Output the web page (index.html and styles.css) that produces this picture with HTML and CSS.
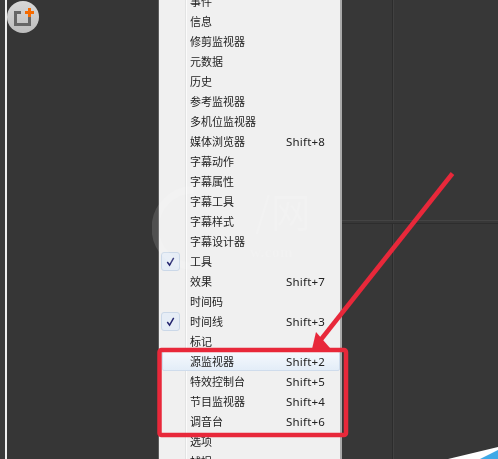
FILE: index.html
```html
<!DOCTYPE html>
<html lang="zh">
<head>
<meta charset="utf-8">
<title>窗口菜单</title>
<link rel="stylesheet" href="styles.css">
</head>
<body>
<div class="screen">
  <div class="edge"></div>
  <div class="edge-line"></div>
  <div class="panel-left"></div>
  <ul class="menu">
    <li class="row"><span class="slot"></span><span class="label">事件</span></li>
    <li class="row"><span class="slot"></span><span class="label">信息</span></li>
    <li class="row"><span class="slot"></span><span class="label">修剪监视器</span></li>
    <li class="row"><span class="slot"></span><span class="label">元数据</span></li>
    <li class="row"><span class="slot"></span><span class="label">历史</span></li>
    <li class="row"><span class="slot"></span><span class="label">参考监视器</span></li>
    <li class="row"><span class="slot"></span><span class="label">多机位监视器</span></li>
    <li class="row"><span class="slot"></span><span class="label">媒体浏览器</span><span class="key">Shift+8</span></li>
    <li class="row"><span class="slot"></span><span class="label">字幕动作</span></li>
    <li class="row"><span class="slot"></span><span class="label">字幕属性</span></li>
    <li class="row"><span class="slot"></span><span class="label">字幕工具</span></li>
    <li class="row"><span class="slot"></span><span class="label">字幕样式</span></li>
    <li class="row"><span class="slot"></span><span class="label">字幕设计器</span></li>
    <li class="row"><span class="slot checked"><svg class="tick" viewBox="0 0 12 12"><path d="M2.5 6.5 L5 10 L9.5 2"/></svg></span><span class="label">工具</span></li>
    <li class="row"><span class="slot"></span><span class="label">效果</span><span class="key">Shift+7</span></li>
    <li class="row"><span class="slot"></span><span class="label">时间码</span></li>
    <li class="row"><span class="slot checked"><svg class="tick" viewBox="0 0 12 12"><path d="M2.5 6.5 L5 10 L9.5 2"/></svg></span><span class="label">时间线</span><span class="key">Shift+3</span></li>
    <li class="row"><span class="slot"></span><span class="label">标记</span></li>
    <li class="row hover"><span class="slot"></span><span class="label">源监视器</span><span class="key">Shift+2</span></li>
    <li class="row"><span class="slot"></span><span class="label">特效控制台</span><span class="key">Shift+5</span></li>
    <li class="row"><span class="slot"></span><span class="label">节目监视器</span><span class="key">Shift+4</span></li>
    <li class="row"><span class="slot"></span><span class="label">调音台</span><span class="key">Shift+6</span></li>
    <li class="row"><span class="slot"></span><span class="label">选项</span></li>
    <li class="row"><span class="slot"></span><span class="label">捕捉</span></li>
  </ul>
  <div class="panel-right">
    <div class="pane-top"><div class="pane-a"></div><div class="pane-b"></div></div>
    <div class="pane-rule"></div>
    <div class="pane-bottom"><div class="pane-a"></div><div class="pane-b"></div></div>
  </div>

  <div class="mark">
    <svg class="mark-arc" viewBox="0 0 60 100"><path d="M50 4 A46 46 0 0 0 50 96"/></svg>
    <span class="mark-cn">/网</span>
    <span class="mark-en">w.com</span>
  </div>

  <svg class="badge" viewBox="0 0 32 32">
    <defs>
      <linearGradient id="bg" x1="0" y1="0" x2="0" y2="1">
        <stop offset="0" stop-color="#d8d8d8"/><stop offset="1" stop-color="#bdbdbd"/>
      </linearGradient>
    </defs>
    <circle cx="16" cy="16" r="16" fill="url(#bg)"/>
    <path d="M14 11.5 H8.5 V23.5 H22.5 V16" fill="none" stroke="#666" stroke-width="3"/>
    <path d="M22.5 7 V16 M18 11.5 H27" fill="none" stroke="#f56a00" stroke-width="3"/>
  </svg>

  <svg class="notes" viewBox="0 0 498 459">
    <rect class="note-box" x="159.5" y="350" width="186.500" height="85" rx="2"/>
    <path class="note-line" d="M452.500 173.500 L319 342"/>
    <path class="note-head" d="M312 349 L316 332 L330 348 Z"/>
    <path class="corner-white" d="M448 459 L498 447 V459 Z"/>
    <path class="corner-blue" d="M480 459 L498 450 V459 Z"/>
  </svg>
</div>
</body>
</html>
```

FILE: styles.css
```css
* { box-sizing: border-box; }
html, body { margin: 0; padding: 0; background: #363636; }
.screen {
  position: relative;
  display: flex;
  width: 498px;
  height: 459px;
  overflow: hidden;
  filter: blur(0.4px);
}
.edge { flex: 0 0 5px; background: #3a3a3a; }
.edge-line { flex: 0 0 2px; background: #efefef; }
.panel-left { flex: 0 0 151px; background: #363636; }

.menu {
  flex: 0 0 184px;
  height: 490px;
  margin: -9px 0 0;
  padding: 0;
  list-style: none;
  background: linear-gradient(to right, #f0f0f0 26px, #e2e3e3 26px, #e2e3e3 27px, #fbfbfb 27px, #fbfbfb 28px, #f0f0f0 28px);
  border-left: 1px solid #5c5c5c;
  border-right: 2px solid #a9a9a9;
  font: 11px/20px "Noto Sans CJK SC", "Noto Sans", sans-serif;
  color: #222;
}
.row {
  display: flex;
  align-items: center;
  height: 20px;
}
.slot {
  flex: 0 0 19px;
  height: 19px;
  margin-left: 2px;
  display: flex;
  align-items: center;
  justify-content: center;
}
.checked {
  background: #e6edf6;
  border: 1px solid #cbd8e8;
  border-radius: 3px;
}
.tick {
  width: 11px;
  height: 11px;
  fill: none;
  stroke: #23246e;
  stroke-width: 1.600;
}
.label {
  flex: 0 0 96px;
  margin-left: 10px;
  white-space: nowrap;
}
.key {
  margin-top: 1px;
  font: 11.500px/20px "Noto Sans", sans-serif;
  letter-spacing: 0.2px;
  white-space: nowrap;
}
.hover {
  width: 178px;
  margin-left: 3px;
  background: linear-gradient(#f6f9fd, #e3edf8);
  border: 1px solid #cfdcec;
  border-radius: 2px;
}
.hover .slot { margin-left: -2px; }

.panel-right {
  flex: 1;
  display: flex;
  flex-direction: column;
  background: #373737;
}
.pane-top { flex: 0 0 220px; display: flex; }
.pane-rule {
  flex: 0 0 4px;
  border-top: 1px solid #444;
  border-bottom: 1px solid #2d2d2d;
}
.pane-bottom { flex: 1; display: flex; }
.pane-a { flex: 0 0 51px; border-right: 1px solid #2c2c2c; }
.pane-b { flex: 1; border-left: 1px solid #414141; }

.mark {
  position: absolute;
  left: 152px;
  top: 186px;
  width: 180px;
  height: 80px;
  color: rgba(255, 255, 255, 0.13);
}
.mark-arc {
  position: absolute;
  left: 0;
  top: 0;
  width: 50px;
  height: 84px;
  fill: none;
  stroke: rgba(255, 255, 255, 0.13);
  stroke-width: 9;
}
.mark-cn {
  position: absolute;
  left: 103px;
  top: 2px;
  font: 40px/44px "Noto Sans CJK SC", sans-serif;
}
.mark-en {
  position: absolute;
  left: 98px;
  top: 56px;
  font: bold 15px/20px "Liberation Serif", serif;
  letter-spacing: 0.5px;
}

.badge {
  position: absolute;
  left: 7px;
  top: 1px;
  width: 32px;
  height: 32px;
}
.notes {
  position: absolute;
  left: 0;
  top: 0;
  width: 498px;
  height: 459px;
}
.note-box { fill: none; stroke: #e8283a; stroke-width: 4.500; }
.note-line { fill: none; stroke: #e8283a; stroke-width: 4.500; }
.note-head { fill: #e8283a; }
.corner-white { fill: #fff; }
.corner-blue { fill: #3fa9e6; }
```
